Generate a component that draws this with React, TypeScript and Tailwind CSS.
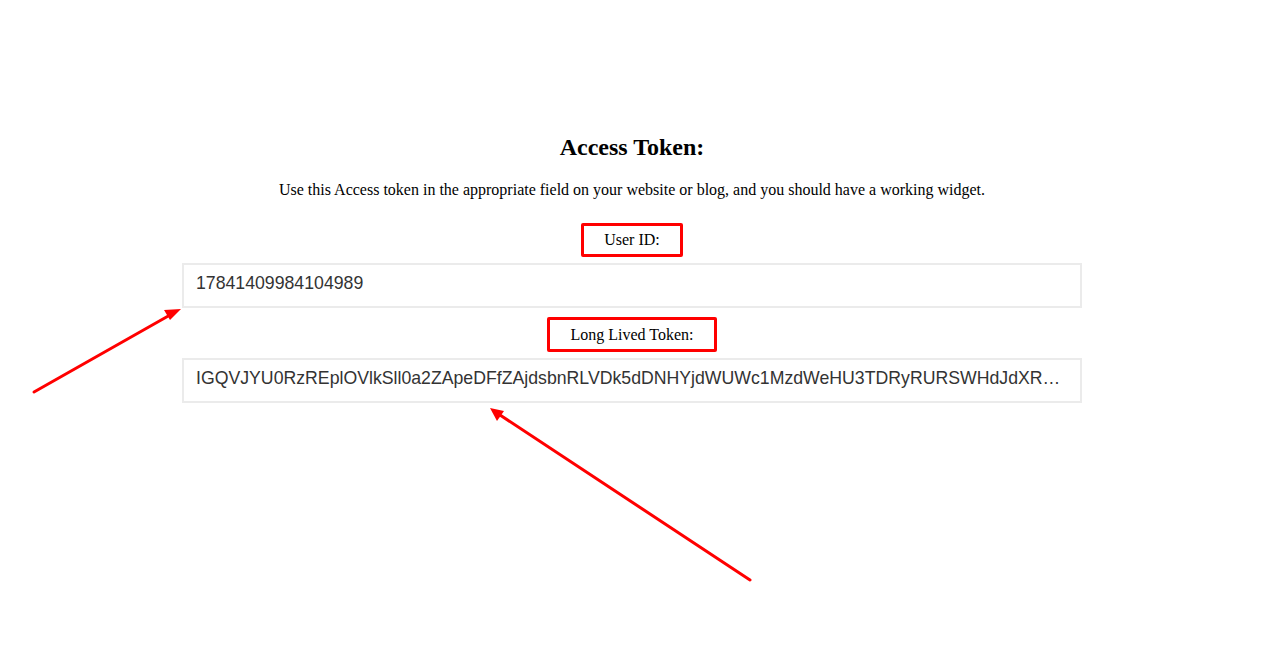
const userId = "17841409984104989";
const token =
  "IGQVJYU0RzREplOVlkSll0a2ZApeDFfZAjdsbnRLVDk5dDNHYjdWUWc1MzdWeHU3TDRyRURSWHdJdXRxNmVhZAk1mS0ZAxZA3A5ZATdRR0xQ";

function Field({ value }: { value: string }) {
  return (
    <div className="w-full h-[45px] border-2 border-[#ebebeb] bg-white pl-3 pr-3 pt-2">
      <div className="text-[17.7px] leading-[20px] text-[#333] whitespace-nowrap overflow-hidden text-ellipsis font-['Liberation_Sans',Arial,sans-serif]">
        {value}
      </div>
    </div>
  );
}

function Label({ children, tall }: { children: React.ReactNode; tall?: boolean }) {
  return (
    <div
      className={`flex items-center px-5 border-[3px] border-[#ff0000] rounded-[2px] text-[16px] text-black ${
        tall ? "h-[35px]" : "h-[34px]"
      }`}
    >
      {children}
    </div>
  );
}

export default function App() {
  return (
    <div className="relative w-full h-[655px] bg-white font-['Liberation_Serif','Times_New_Roman',serif]">
      <div className="ml-[182px] w-[900px] pt-[132px] flex flex-col items-center">
        <h2 className="text-[24px] leading-[30px] font-bold text-black">Access Token:</h2>
        <p className="mt-[18px] text-[16px] leading-[20px] text-black">
          Use this Access token in the appropriate field on your website or blog, and you should have a working widget.
        </p>
        <div className="mt-[23px] flex">
          <Label>User ID:</Label>
        </div>
        <div className="mt-[6px] w-full">
          <Field value={userId} />
        </div>
        <div className="mt-[9px] flex">
          <Label tall>Long Lived Token:</Label>
        </div>
        <div className="mt-[6px] w-full">
          <Field value={token} />
        </div>
      </div>

      {/* annotation arrows */}
      <svg className="absolute inset-0 pointer-events-none" width="1267" height="655" viewBox="0 0 1267 655">
        <g stroke="#ff0000" strokeWidth="3" strokeLinecap="round">
          <line x1="34" y1="392" x2="170" y2="315" />
          <line x1="750" y1="580" x2="500" y2="415" />
        </g>
        <g fill="#ff0000">
          <polygon points="181,309 164,310 170,320" />
          <polygon points="490,408 497,421 504,411" />
        </g>
      </svg>
    </div>
  );
}
